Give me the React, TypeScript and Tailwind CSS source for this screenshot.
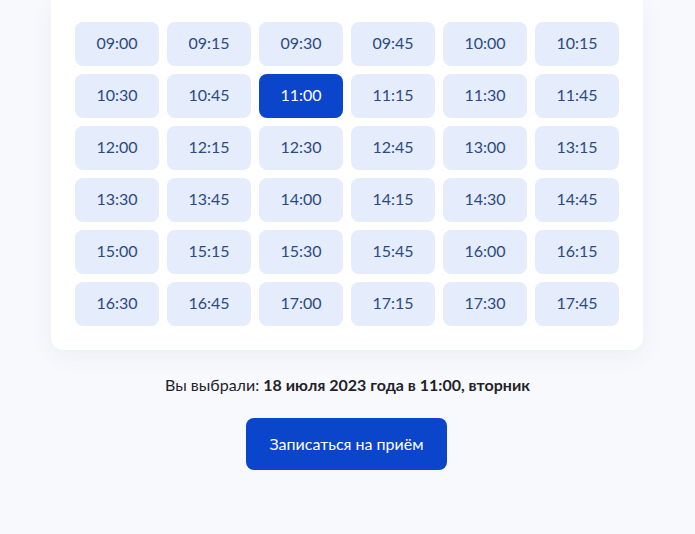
const times = [
  "09:00", "09:15", "09:30", "09:45", "10:00", "10:15",
  "10:30", "10:45", "11:00", "11:15", "11:30", "11:45",
  "12:00", "12:15", "12:30", "12:45", "13:00", "13:15",
  "13:30", "13:45", "14:00", "14:15", "14:30", "14:45",
  "15:00", "15:15", "15:30", "15:45", "16:00", "16:15",
  "16:30", "16:45", "17:00", "17:15", "17:30", "17:45",
];

export default function App() {
  const selected = "11:00";
  return (
    <div
      className="min-h-[534px] w-full bg-[#f8f9fd] flex flex-col items-center"
      style={{ fontFamily: "Lato, 'Noto Sans', sans-serif" }}
    >
      <div className="w-[592px] mr-[1px] bg-white rounded-b-xl shadow-[0_6px_24px_rgba(40,70,140,0.06)] px-6 pt-[22px] pb-6">
        <div className="grid grid-cols-6 gap-2">
          {times.map((t) => (
            <button
              key={t}
              className={
                t === selected
                  ? "h-11 pb-[2px] rounded-lg bg-[#0b45cc] text-white text-base"
                  : "h-11 pb-[2px] rounded-lg bg-[#e5ecfc] text-[#2c4a82] text-base"
              }
            >
              {t}
            </button>
          ))}
        </div>
      </div>
      <p className="mt-[23px] text-base text-[#1f2328]">
        Вы выбрали: <span className="font-bold">18 июля 2023 года в 11:00, вторник</span>
      </p>
      <button className="mt-[21px] mr-[2px] w-[201px] h-[52px] rounded-lg bg-[#0b45cc] text-white text-base">
        Записаться на приём
      </button>
    </div>
  );
}
